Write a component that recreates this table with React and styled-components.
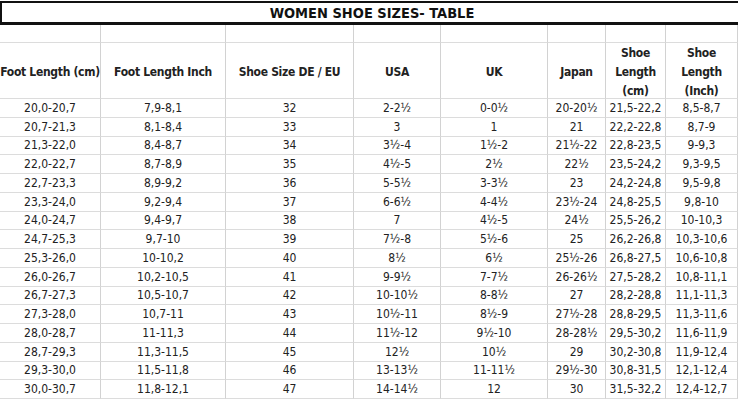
import React from "react";
import styled, { createGlobalStyle } from "styled-components";

const Global = createGlobalStyle`
  html, body { margin: 0; padding: 0; background: #fff; }
  body { font-family: "DejaVu Sans Condensed", "Liberation Sans", sans-serif; color: #222; }
`;

const COLS = "101px 125px 128px 87px 107px 58px 60px 72px";

const Page = styled.div`
  width: 738px;
  height: 400px;
  overflow: hidden;
  padding-top: 1px;
  box-sizing: border-box;
`;

const TitleBar = styled.div`
  height: 24px;
  box-sizing: border-box;
  border-top: 2px solid #111;
  border-bottom: 3px solid #111;
  border-left: 2px solid #111;
  display: flex;
  align-items: center;
  justify-content: center;
  font-weight: 700;
  font-size: 14.5px;
  color: #111;
  padding-left: 4px;
`;

const Grid = styled.div`
  display: grid;
  grid-template-columns: ${COLS};
`;

const Cell = styled.div`
  box-sizing: border-box;
  height: ${(p) => p.$h}px;
  border-right: 1px solid #d2d2d2;
  border-bottom: 1px solid #dcdcdc;
  display: flex;
  align-items: center;
  justify-content: center;
  text-align: center;
  font-size: 12px;
  font-weight: ${(p) => (p.$bold ? 700 : 400)};
  letter-spacing: ${(p) => (p.$bold ? "-0.3px" : "0")};
  line-height: 19px;
  padding-top: ${(p) => (p.$bold ? "3px" : "1px")};
  white-space: nowrap;
`;

const Wrap = styled.span`
  white-space: normal;
  display: block;
  width: 44px;
`;

const headers = [
  "Foot Length (cm)",
  "Foot Length Inch",
  "Shoe Size DE / EU",
  "USA",
  "UK",
  "Japan",
  "Shoe Length (cm)",
  "Shoe Length (Inch)",
];

const rows = [
  ["20,0-20,7", "7,9-8,1", "32", "2-2½", "0-0½", "20-20½", "21,5-22,2", "8,5-8,7"],
  ["20,7-21,3", "8,1-8,4", "33", "3", "1", "21", "22,2-22,8", "8,7-9"],
  ["21,3-22,0", "8,4-8,7", "34", "3½-4", "1½-2", "21½-22", "22,8-23,5", "9-9,3"],
  ["22,0-22,7", "8,7-8,9", "35", "4½-5", "2½", "22½", "23,5-24,2", "9,3-9,5"],
  ["22,7-23,3", "8,9-9,2", "36", "5-5½", "3-3½", "23", "24,2-24,8", "9,5-9,8"],
  ["23,3-24,0", "9,2-9,4", "37", "6-6½", "4-4½", "23½-24", "24,8-25,5", "9,8-10"],
  ["24,0-24,7", "9,4-9,7", "38", "7", "4½-5", "24½", "25,5-26,2", "10-10,3"],
  ["24,7-25,3", "9,7-10", "39", "7½-8", "5½-6", "25", "26,2-26,8", "10,3-10,6"],
  ["25,3-26,0", "10-10,2", "40", "8½", "6½", "25½-26", "26,8-27,5", "10,6-10,8"],
  ["26,0-26,7", "10,2-10,5", "41", "9-9½", "7-7½", "26-26½", "27,5-28,2", "10,8-11,1"],
  ["26,7-27,3", "10,5-10,7", "42", "10-10½", "8-8½", "27", "28,2-28,8", "11,1-11,3"],
  ["27,3-28,0", "10,7-11", "43", "10½-11", "8½-9", "27½-28", "28,8-29,5", "11,3-11,6"],
  ["28,0-28,7", "11-11,3", "44", "11½-12", "9½-10", "28-28½", "29,5-30,2", "11,6-11,9"],
  ["28,7-29,3", "11,3-11,5", "45", "12½", "10½", "29", "30,2-30,8", "11,9-12,4"],
  ["29,3-30,0", "11,5-11,8", "46", "13-13½", "11-11½", "29½-30", "30,8-31,5", "12,1-12,4"],
  ["30,0-30,7", "11,8-12,1", "47", "14-14½", "12", "30", "31,5-32,2", "12,4-12,7"],
];

export default function App() {
  return (
    <Page>
      <Global />
      <TitleBar>WOMEN SHOE SIZES- TABLE</TitleBar>
      <Grid>
        {headers.map((_, i) => (
          <Cell key={"e" + i} $h={18} />
        ))}
        {headers.map((h, i) => (
          <Cell key={"h" + i} $h={56} $bold>
            {i >= 6 ? <Wrap>{h}</Wrap> : h}
          </Cell>
        ))}
        {rows.map((r, ri) =>
          r.map((v, ci) => (
            <Cell key={ri + "-" + ci} $h={18.75}>
              {v}
            </Cell>
          ))
        )}
      </Grid>
    </Page>
  );
}
